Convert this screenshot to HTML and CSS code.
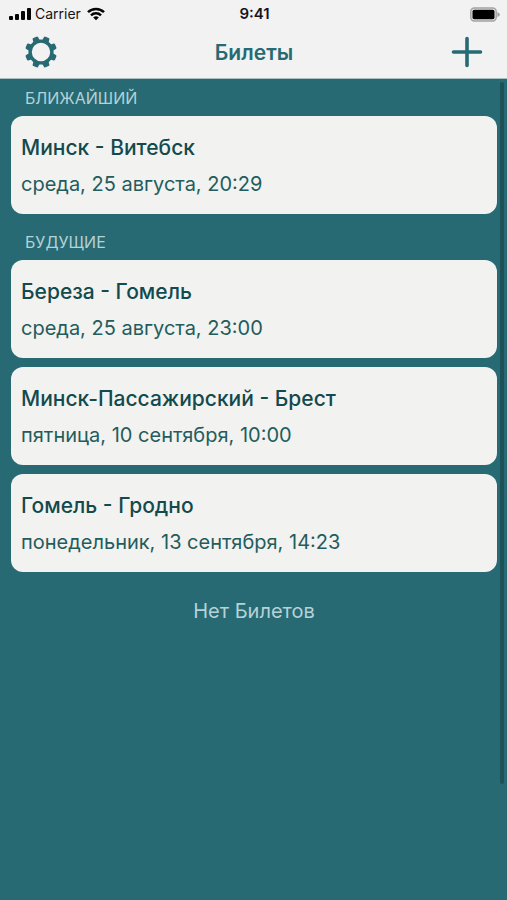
FILE: index.html
```html
<!DOCTYPE html>
<html lang="ru">
<head>
<meta charset="utf-8">
<meta name="viewport" content="width=device-width, initial-scale=1">
<title>Билеты</title>
<link rel="stylesheet" href="styles.css">
</head>
<body>
<header class="header">
  <div class="status">
    <div class="status-left">
      <svg width="22" height="14" viewBox="0 0 22 14" fill="#050505" aria-hidden="true">
        <rect x="0" y="9" width="4" height="4" rx="1"/>
        <rect x="6" y="7" width="4" height="6" rx="1"/>
        <rect x="12" y="4" width="4" height="9" rx="1"/>
        <rect x="18" y="1" width="4" height="12" rx="1"/>
      </svg>
      <span class="carrier">Carrier</span>
      <svg class="wifi" width="18" height="14" viewBox="0 0 18 14" fill="none" stroke="#050505" stroke-width="2.5" aria-hidden="true">
        <path d="M1 5.2a11.3 11.3 0 0 1 16 0"/>
        <path d="M4 8.4a7.1 7.1 0 0 1 10 0"/>
        <path d="M9 13.3 6.2 10.5a4 4 0 0 1 5.6 0z" fill="#050505" stroke="none"/>
      </svg>
    </div>
    <time class="clock">9:41</time>
    <svg class="battery" width="30" height="15" viewBox="0 0 30 15" aria-hidden="true">
      <rect x="0.8" y="1" width="25.4" height="13" rx="3.5" fill="#e4e4e4" stroke="#a2a2a2" stroke-width="1.4"/>
      <rect x="2.5" y="2.8" width="22" height="9.4" rx="1.8" fill="#000"/>
      <path d="M27.3 5q2.6 1 2.6 2.5T27.3 10z" fill="#a2a2a2"/>
    </svg>
  </div>
  <nav class="nav">
    <button class="icon-button" type="button" aria-label="Настройки">
      <svg width="32" height="32" viewBox="-16 -16 32 32" aria-hidden="true">
        <defs><path id="tooth" d="M-3.4-11-2.9-14.9Q-2.7-15.9-1.7-15.9H1.7Q2.7-15.9 2.9-14.9L3.4-11z"/></defs>
        <circle r="10.9" fill="none" stroke="#276a73" stroke-width="3.4"/>
        <g fill="#276a73">
          <use href="#tooth" transform="rotate(22.5)"/>
          <use href="#tooth" transform="rotate(67.5)"/>
          <use href="#tooth" transform="rotate(112.5)"/>
          <use href="#tooth" transform="rotate(157.5)"/>
          <use href="#tooth" transform="rotate(202.5)"/>
          <use href="#tooth" transform="rotate(247.5)"/>
          <use href="#tooth" transform="rotate(292.5)"/>
          <use href="#tooth" transform="rotate(337.5)"/>
        </g>
      </svg>
    </button>
    <h1 class="title">Билеты</h1>
    <button class="icon-button" type="button" aria-label="Добавить билет">
      <svg width="32" height="32" viewBox="0 0 32 32" fill="none" stroke="#276a73" stroke-width="3.6" stroke-linecap="round" aria-hidden="true">
        <path d="M16 2.5v27M2.5 16h27"/>
      </svg>
    </button>
  </nav>
</header>
<main class="content">
  <section>
    <h2 class="section-title">БЛИЖАЙШИЙ</h2>
    <ul class="tickets">
      <li class="ticket"><h3 class="route">Минск - Витебск</h3><p class="date">среда, 25 августа, 20:29</p></li>
    </ul>
  </section>
  <section>
    <h2 class="section-title">БУДУЩИЕ</h2>
    <ul class="tickets">
      <li class="ticket"><h3 class="route">Береза - Гомель</h3><p class="date">среда, 25 августа, 23:00</p></li>
      <li class="ticket"><h3 class="route">Минск-Пассажирский - Брест</h3><p class="date">пятница, 10 сентября, 10:00</p></li>
      <li class="ticket"><h3 class="route">Гомель - Гродно</h3><p class="date">понедельник, 13 сентября, 14:23</p></li>
    </ul>
  </section>
  <p class="empty">Нет Билетов</p>
  <div class="scroll-thumb" aria-hidden="true"></div>
</main>
</body>
</html>
```
FILE: styles.css
```css
* {
  box-sizing: border-box;
  margin: 0;
  padding: 0;
}

body {
  display: flex;
  flex-direction: column;
  min-height: 100vh;
  background: #276a73;
  font-family: Inter, "Liberation Sans", sans-serif;
}

svg {
  display: block;
}

.header {
  background: #f2f2f2;
  border-bottom: 1px solid #a9c0c3;
}

.status {
  display: grid;
  grid-template-columns: 1fr auto 1fr;
  align-items: center;
  height: 26px;
  padding: 0 7px 0 9px;
  font-size: 14px;
  line-height: 28px;
  color: #151515;
}

.status-left {
  display: flex;
  align-items: center;
  gap: 4px;
}

.wifi {
  margin-left: 2px;
}

.clock {
  font-size: 15px;
  font-weight: 600;
}

.battery {
  justify-self: end;
}

.nav {
  display: flex;
  align-items: center;
  justify-content: space-between;
  height: 52px;
  padding: 0 24px 0 25px;
}

.icon-button {
  border: 0;
  background: none;
  cursor: pointer;
}

.title {
  font-size: 21px;
  font-weight: 600;
  line-height: 33px;
  color: #276a73;
}

.content {
  position: relative;
  flex: 1;
  padding: 0 10px 0 11px;
}

.section-title {
  padding: 5px 14px 3px;
  font-size: 16px;
  font-weight: 400;
  line-height: 29px;
  color: #b5d2d7;
}

.tickets {
  display: grid;
  gap: 9px;
  padding-bottom: 9px;
  list-style: none;
}

.ticket {
  padding: 14px 10px 12px;
  border-radius: 12px;
  background: #f2f2f1;
}

.route {
  font-size: 21px;
  font-weight: 500;
  line-height: 36px;
  color: #124a4d;
}

.date {
  font-size: 20px;
  line-height: 36px;
  color: #245c5c;
}

.empty {
  padding: 12px 0;
  font-size: 20px;
  line-height: 36px;
  text-align: center;
  color: #b5d2d7;
}

.scroll-thumb {
  position: absolute;
  top: 3px;
  right: 3px;
  width: 4px;
  height: 702px;
  max-height: 100%;
  border-radius: 2px;
  background: #1c515a;
}
```
